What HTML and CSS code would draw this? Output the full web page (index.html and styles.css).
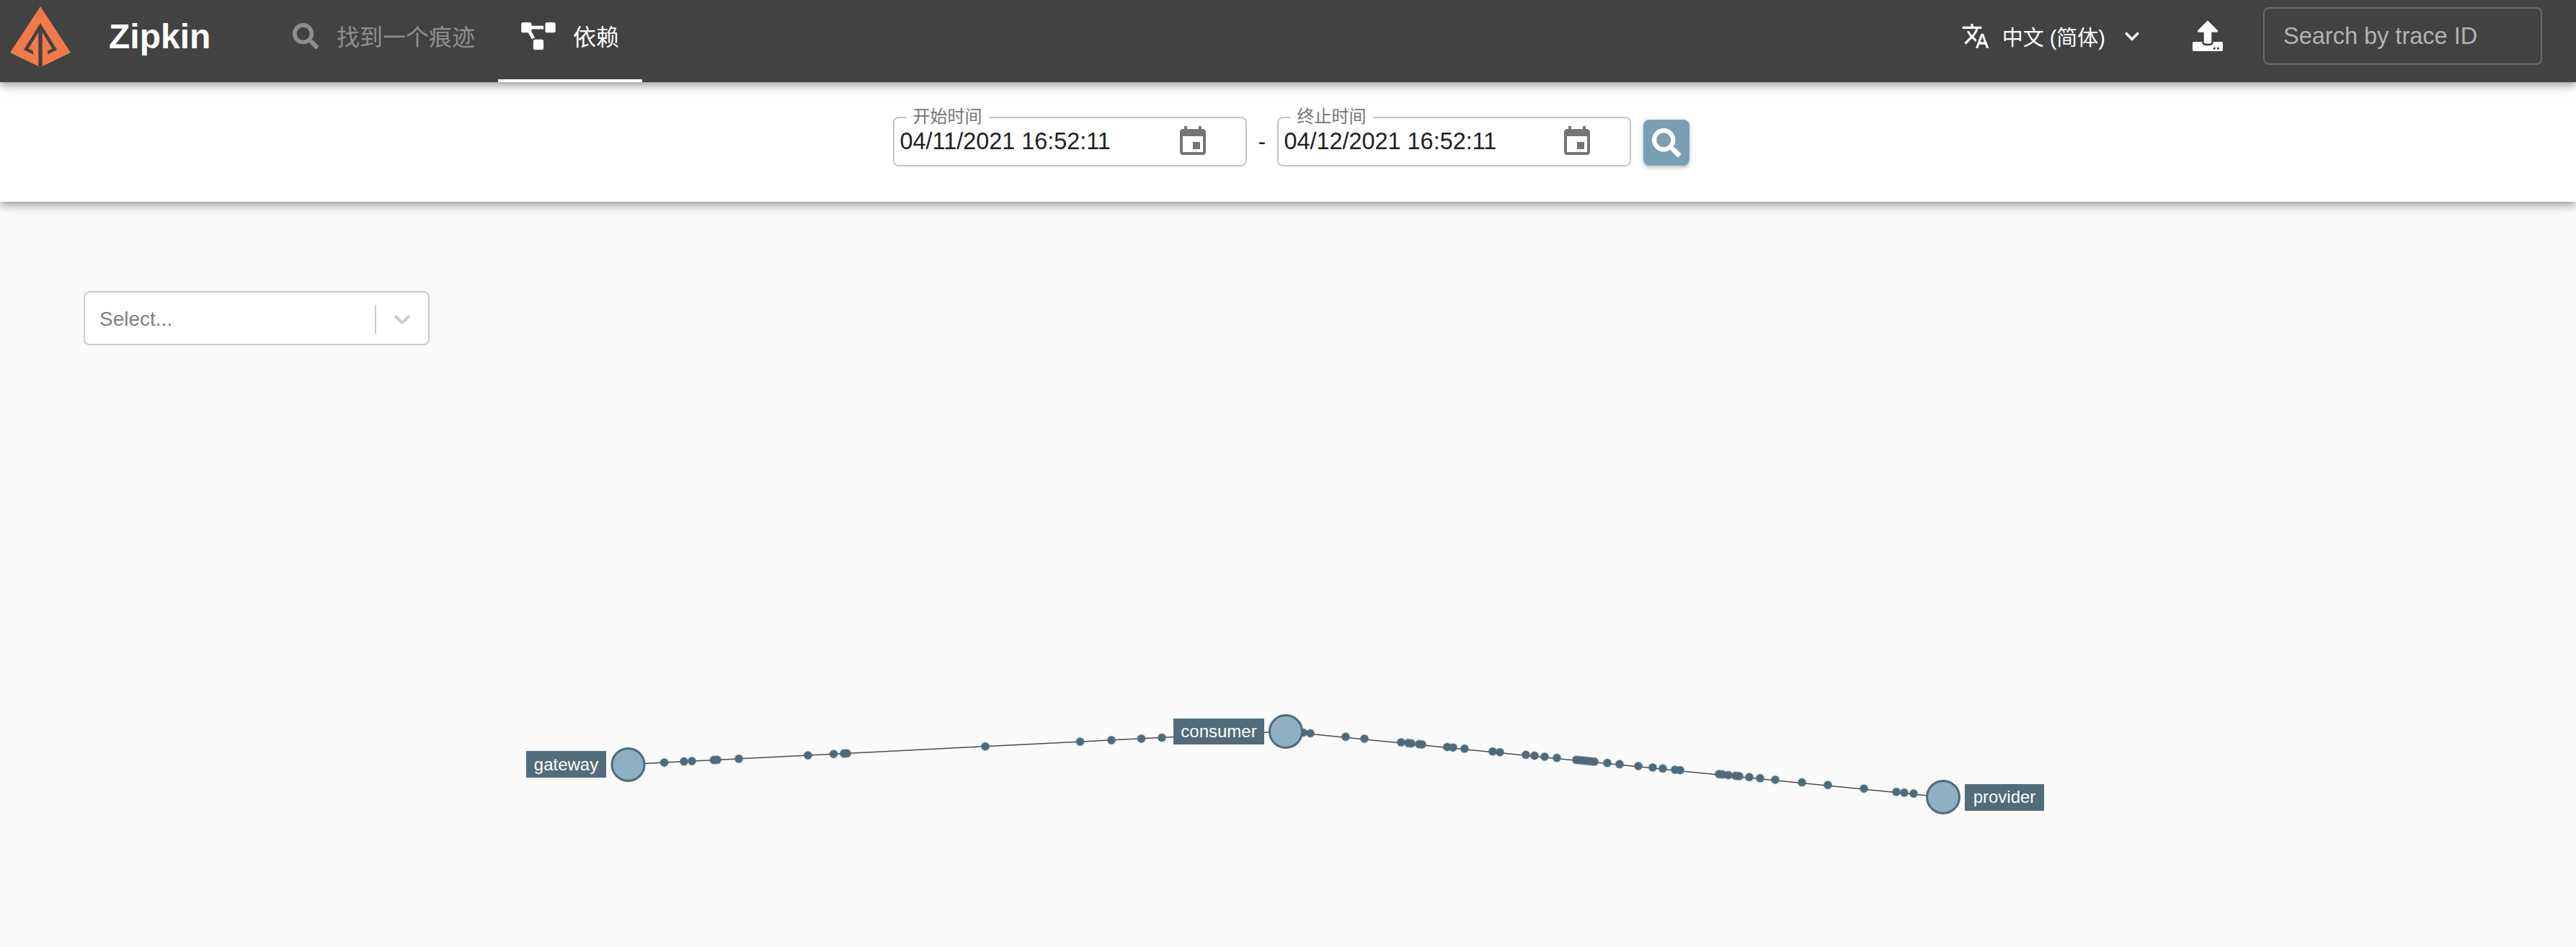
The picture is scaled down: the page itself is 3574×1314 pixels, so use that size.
FILE: index.html
```html
<!DOCTYPE html>
<html lang="zh">
<head>
    <meta charset="UTF-8">
    <meta name="viewport" content="width=device-width, initial-scale=1.0">
    <title>Zipkin</title>
    <link rel="stylesheet" href="styles.css">
</head>
<body>

    <header class="header">
        <svg class="logo" viewBox="0 0 112 100">
            <polygon class="logo-outer" points="56,9 98,73 58.7,92 53.3,92 14,73"/>
            <polygon class="logo-inner" points="56,32 79,69 66,75.5 66,70.5 72.5,67.5 58.7,45 58.7,92 53.3,92 53.3,45 39.5,67.5 46,70.5 46,75.5 33,69"/>
        </svg>
        <div class="brand">Zipkin</div>

        <nav class="tabs">
            <a class="tab">
                <svg class="tab-icon-search" viewBox="0 0 512 512"><path d="M505 442.7L405.3 343c-4.5-4.5-10.6-7-17-7H372c27.6-35.3 44-79.7 44-128C416 93.1 322.9 0 208 0S0 93.1 0 208s93.1 208 208 208c48.3 0 92.7-16.4 128-44v16.3c0 6.4 2.5 12.5 7 17l99.7 99.7c9.4 9.4 24.6 9.4 33.9 0l28.3-28.3c9.4-9.4 9.4-24.6.1-34zM208 336c-70.7 0-128-57.2-128-128 0-70.7 57.2-128 128-128 70.7 0 128 57.2 128 128 0 70.7-57.2 128-128 128z"/></svg>
                <span>找到一个痕迹</span>
            </a>
            <a class="tab tab-active">
                <svg class="tab-icon-deps" viewBox="0 0 640 512"><path d="M384 320H256c-17.67 0-32 14.33-32 32v128c0 17.67 14.33 32 32 32h128c17.67 0 32-14.33 32-32V352c0-17.67-14.33-32-32-32zM192 32c0-17.67-14.33-32-32-32H32C14.33 0 0 14.33 0 32v128c0 17.67 14.33 32 32 32h95.72l73.16 128.04C211.98 300.98 232.4 288 256 288h.28L192 175.51V128h224V64H192V32zM608 0H480c-17.67 0-32 14.33-32 32v128c0 17.67 14.33 32 32 32h128c17.67 0 32-14.33 32-32V32c0-17.67-14.33-32-32-32z"/></svg>
                <span>依赖</span>
            </a>
        </nav>

        <div class="header-right">
            <div class="lang">
                <svg class="lang-icon" viewBox="0 0 24 24"><path d="M12.87 15.07l-2.54-2.51.03-.03c1.74-1.94 2.98-4.17 3.71-6.53H17V4h-7V2H8v2H1v1.99h11.17C11.5 7.92 10.44 9.75 9 11.35 8.07 10.32 7.3 9.19 6.69 8h-2c.73 1.63 1.73 3.17 2.98 4.56l-5.09 5.02L4 19l5-5 3.11 3.11.76-2.04zM18.5 10h-2L12 22h2l1.12-3h4.75L21 22h2l-4.5-12zm-2.62 7l1.62-4.33L19.12 17h-3.24z"/></svg>
                <span class="lang-name">中文 (简体)</span>
                <svg class="lang-icon" viewBox="0 0 24 24"><path d="M16.59 8.59L12 13.17 7.41 8.59 6 10l6 6 6-6z"/></svg>
            </div>
            <svg class="upload-icon" viewBox="0 0 512 512"><path d="M296 384h-80c-13.3 0-24-10.7-24-24V192h-87.7c-17.8 0-26.7-21.5-14.1-34.1L242.3 5.7c7.5-7.5 19.8-7.5 27.3 0l152.2 152.2c12.6 12.6 3.7 34.1-14.1 34.1H320v168c0 13.3-10.7 24-24 24zm216-8v112c0 13.3-10.7 24-24 24H24c-13.3 0-24-10.7-24-24V376c0-13.3 10.7-24 24-24h136v8c0 30.9 25.1 56 56 56h80c30.9 0 56-25.1 56-56v-8h136c13.3 0 24 10.7 24 24zm-124 88c0-11-9-20-20-20s-20 9-20 20 9 20 20 20 20-9 20-20zm64 0c0-11-9-20-20-20s-20 9-20 20 9 20 20 20 20-9 20-20z"/></svg>
            <input class="trace-search" type="text" placeholder="Search by trace ID">
        </div>
    </header>

    <section class="toolbar">
        <div class="date-field">
            <label class="date-label">开始时间</label>
            <span class="date-value">04/11/2021 16:52:11</span>
            <svg class="date-icon" viewBox="0 0 24 24"><path d="M17 12h-5v5h5v-5zM16 1v2H8V1H6v2H5c-1.11 0-1.99.9-1.99 2L3 19c0 1.1.89 2 2 2h14c1.1 0 2-.9 2-2V5c0-1.1-.9-2-2-2h-1V1h-2zm3 18H5V8h14v11z"/></svg>
        </div>
        <span class="date-dash">-</span>
        <div class="date-field">
            <label class="date-label">终止时间</label>
            <span class="date-value">04/12/2021 16:52:11</span>
            <svg class="date-icon" viewBox="0 0 24 24"><path d="M17 12h-5v5h5v-5zM16 1v2H8V1H6v2H5c-1.11 0-1.99.9-1.99 2L3 19c0 1.1.89 2 2 2h14c1.1 0 2-.9 2-2V5c0-1.1-.9-2-2-2h-1V1h-2zm3 18H5V8h14v11z"/></svg>
        </div>
        <button class="search-button">
            <svg viewBox="0 0 512 512"><path d="M505 442.7L405.3 343c-4.5-4.5-10.6-7-17-7H372c27.6-35.3 44-79.7 44-128C416 93.1 322.9 0 208 0S0 93.1 0 208s93.1 208 208 208c48.3 0 92.7-16.4 128-44v16.3c0 6.4 2.5 12.5 7 17l99.7 99.7c9.4 9.4 24.6 9.4 33.9 0l28.3-28.3c9.4-9.4 9.4-24.6.1-34zM208 336c-70.7 0-128-57.2-128-128 0-70.7 57.2-128 128-128 70.7 0 128 57.2 128 128 0 70.7-57.2 128-128 128z"/></svg>
        </button>
    </section>

    <main class="content">
        <!-- dependency graph, viewBox is in page coordinates -->
        <svg class="graph" viewBox="0 280 3574 1034">
            <line class="edge" x1="871" y1="1060.5" x2="1784" y2="1014.8"/>
            <line class="edge" x1="1784" y1="1015" x2="2695" y2="1106"/>

            <g class="dots">
                <circle cx="921.6" cy="1058"/><circle cx="949" cy="1056.6"/><circle cx="960" cy="1056"/>
                <circle cx="990.5" cy="1054.5"/><circle cx="995" cy="1054.3"/><circle cx="1025" cy="1052.8"/>
                <circle cx="1121" cy="1048"/><circle cx="1156.6" cy="1046.2"/><circle cx="1171" cy="1045.5"/>
                <circle cx="1175" cy="1045.3"/><circle cx="1367" cy="1035.7"/><circle cx="1498.6" cy="1029.1"/>
                <circle cx="1542" cy="1027"/><circle cx="1583.6" cy="1024.9"/><circle cx="1612" cy="1023.5"/>

                <circle cx="1808" cy="1016.4"/><circle cx="1818" cy="1017.4"/><circle cx="1867" cy="1022.3"/>
                <circle cx="1893" cy="1024.9"/><circle cx="1944" cy="1030"/><circle cx="1954" cy="1031"/>
                <circle cx="1958" cy="1031.4"/><circle cx="1969" cy="1032.5"/><circle cx="1973" cy="1032.9"/>
                <circle cx="2008" cy="1036.4"/><circle cx="2016" cy="1037.2"/><circle cx="2032" cy="1038.8"/>
                <circle cx="2071" cy="1042.7"/><circle cx="2081" cy="1043.7"/><circle cx="2117" cy="1047.3"/>
                <circle cx="2129" cy="1048.5"/><circle cx="2143" cy="1049.9"/><circle cx="2160" cy="1051.6"/>
                <circle cx="2187" cy="1054.3"/><circle cx="2192" cy="1054.8"/><circle cx="2197" cy="1055.3"/>
                <circle cx="2202" cy="1055.8"/><circle cx="2207" cy="1056.3"/><circle cx="2212" cy="1056.8"/>
                <circle cx="2230" cy="1058.6"/><circle cx="2247" cy="1060.3"/><circle cx="2273" cy="1062.9"/>
                <circle cx="2293" cy="1064.9"/><circle cx="2307" cy="1066.3"/><circle cx="2324" cy="1068"/>
                <circle cx="2331" cy="1068.7"/><circle cx="2385" cy="1074.1"/><circle cx="2390" cy="1074.6"/>
                <circle cx="2398" cy="1075.4"/><circle cx="2408" cy="1076.4"/><circle cx="2413" cy="1076.9"/>
                <circle cx="2427" cy="1078.3"/><circle cx="2442" cy="1079.8"/><circle cx="2463" cy="1081.9"/>
                <circle cx="2500" cy="1085.6"/><circle cx="2536" cy="1089.2"/><circle cx="2586" cy="1094.2"/>
                <circle cx="2631" cy="1098.7"/><circle cx="2642" cy="1099.8"/><circle cx="2655" cy="1101.1"/>
            </g>

            <rect class="node-label" x="730" y="1042" width="111" height="37"/>
            <text class="node-text" x="785.5" y="1069">gateway</text>
            <circle class="node" cx="871.5" cy="1061" r="22.5"/>

            <rect class="node-label" x="1628" y="997" width="126" height="36"/>
            <text class="node-text" x="1691" y="1023">consumer</text>
            <circle class="node" cx="1784" cy="1015" r="22.5"/>

            <circle class="node" cx="2696" cy="1106" r="22.5"/>
            <rect class="node-label" x="2726" y="1088" width="110" height="37"/>
            <text class="node-text" x="2781" y="1114">provider</text>
        </svg>

        <div class="service-select">
            <span class="select-placeholder">Select...</span>
            <span class="select-divider"></span>
            <svg class="select-arrow" viewBox="0 0 24 14"><path d="M2 2l10 10L22 2" /></svg>
        </div>
    </main>

</body>
</html>
```

FILE: styles.css
```css
html, body {
    height: 100%;
}

body {
    margin: 0;
    display: flex;
    flex-direction: column;
    overflow: hidden;
    background-color: #fafafa;
    font-family: "Liberation Sans", "Noto Sans CJK SC", sans-serif;
}

/* top bar */
.header {
    position: relative;
    z-index: 2;
    flex: none;
    display: flex;
    align-items: center;
    height: 114px;
    background-color: #424242;
    color: #fff;
    box-shadow: 0 4px 8px -2px rgba(0, 0, 0, 0.2), 0 8px 10px rgba(0, 0, 0, 0.14), 0 2px 20px rgba(0, 0, 0, 0.12);
}

.logo {
    width: 112px;
    height: 100px;
    align-self: flex-start;
}

.logo-outer {
    fill: #f27a48;
}

.logo-inner {
    fill: #424242;
}

.brand {
    width: 223px;
    margin-left: 39px;
    margin-bottom: 14px;
    font-size: 48px;
    font-weight: 700;
}

.tabs {
    display: flex;
    align-self: stretch;
}

.tab {
    display: flex;
    align-items: center;
    box-sizing: border-box;
    height: 114px;
    padding: 0 32px 14px;
    font-size: 32px;
    color: #8f8f8f;
    fill: #8f8f8f;
}

.tab span {
    margin-bottom: 3px;
}

.tab-active {
    padding-bottom: 10px;
    border-bottom: 4px solid #fff;
    color: #fff;
    fill: #fff;
}

.tab-icon-search {
    width: 36px;
    height: 36px;
    margin-right: 25px;
}

.tab-icon-deps {
    width: 48px;
    height: 38px;
    margin-right: 24px;
}

.header-right {
    margin-left: auto;
    padding-right: 47px;
    padding-bottom: 14px;
    display: flex;
    align-items: center;
}

.lang {
    display: flex;
    align-items: center;
    fill: #fff;
}

.lang-icon {
    width: 40px;
    height: 40px;
}

.lang-name {
    margin-left: 17px;
    margin-right: 17px;
    font-size: 29px;
}

.upload-icon {
    width: 42px;
    height: 42px;
    margin-left: 64px;
    fill: #fff;
}

.trace-search {
    box-sizing: border-box;
    width: 387px;
    height: 80px;
    margin-left: 56px;
    padding: 0 26px;
    background: transparent;
    border: 2px solid #6b6b6b;
    border-radius: 8px;
    outline: none;
    color: #fff;
    font-family: inherit;
    font-size: 32.5px;
}

.trace-search::placeholder {
    color: #b3b3b3;
    opacity: 1;
}

/* date range */
.toolbar {
    position: relative;
    z-index: 1;
    flex: none;
    display: flex;
    justify-content: center;
    align-items: flex-start;
    box-sizing: border-box;
    height: 166px;
    padding-top: 48px;
    padding-left: 8px;
    background-color: #fff;
    box-shadow: 0 4px 8px -2px rgba(0, 0, 0, 0.2), 0 8px 10px rgba(0, 0, 0, 0.14), 0 2px 20px rgba(0, 0, 0, 0.12);
}

.date-field {
    position: relative;
    display: flex;
    align-items: center;
    justify-content: space-between;
    box-sizing: border-box;
    width: 491px;
    height: 69px;
    padding: 0 55px 0 8px;
    border: 2px solid #c4c4c4;
    border-radius: 8px;
}

.date-label {
    position: absolute;
    top: -14px;
    left: 17px;
    padding: 0 9px;
    background-color: #fff;
    color: #757575;
    font-size: 24px;
    line-height: 24px;
}

.date-value {
    font-size: 32.4px;
    color: #212121;
}

.date-icon {
    width: 48px;
    height: 48px;
    margin-right: -6px;
    fill: #757575;
}

.date-dash {
    width: 10px;
    margin: 14px 16px 0;
    font-size: 32px;
    line-height: 40px;
    color: #212121;
}

.search-button {
    display: flex;
    align-items: center;
    justify-content: center;
    width: 64px;
    height: 63px;
    margin-top: 4px;
    margin-left: 17px;
    padding: 0;
    border: none;
    border-radius: 8px;
    background-color: #7a9fb5;
    box-shadow: 0 3px 2px -2px rgba(0, 0, 0, 0.2), 0 4px 4px rgba(0, 0, 0, 0.14), 0 2px 10px rgba(0, 0, 0, 0.12);
}

.search-button svg {
    width: 40px;
    height: 40px;
    fill: #fff;
}

/* page body */
.content {
    position: relative;
    flex: 1;
    padding: 124px 0 0 116px;
}

.graph {
    position: absolute;
    top: 0;
    left: 0;
    width: 3574px;
    height: 1034px;
}

.edge {
    stroke: #4a4a4a;
    stroke-width: 1.5;
}

.dots circle {
    r: 5.5px;
    fill: #4f6b7b;
    stroke: #4f6b7b;
    stroke-opacity: 0.3;
    stroke-width: 2;
}

.node {
    fill: #8fb0c2;
    stroke: #4f6b7b;
    stroke-width: 3;
}

.node-label {
    fill: #516c7b;
}

.node-text {
    fill: #fff;
    font-size: 24px;
    text-anchor: middle;
}

.service-select {
    position: relative;
    display: flex;
    align-items: center;
    box-sizing: border-box;
    width: 480px;
    height: 75px;
    padding-left: 20px;
    padding-top: 2px;
    border: 2px solid #ccc;
    border-radius: 8px;
    background-color: #fff;
}

.select-placeholder {
    flex: 1;
    font-size: 28px;
    color: #808080;
}

.select-divider {
    width: 2px;
    height: 40px;
    background-color: #ccc;
}

.select-arrow {
    width: 24px;
    height: 14px;
    margin: 0 24px;
    fill: none;
    stroke: #ccc;
    stroke-width: 4;
}
```
